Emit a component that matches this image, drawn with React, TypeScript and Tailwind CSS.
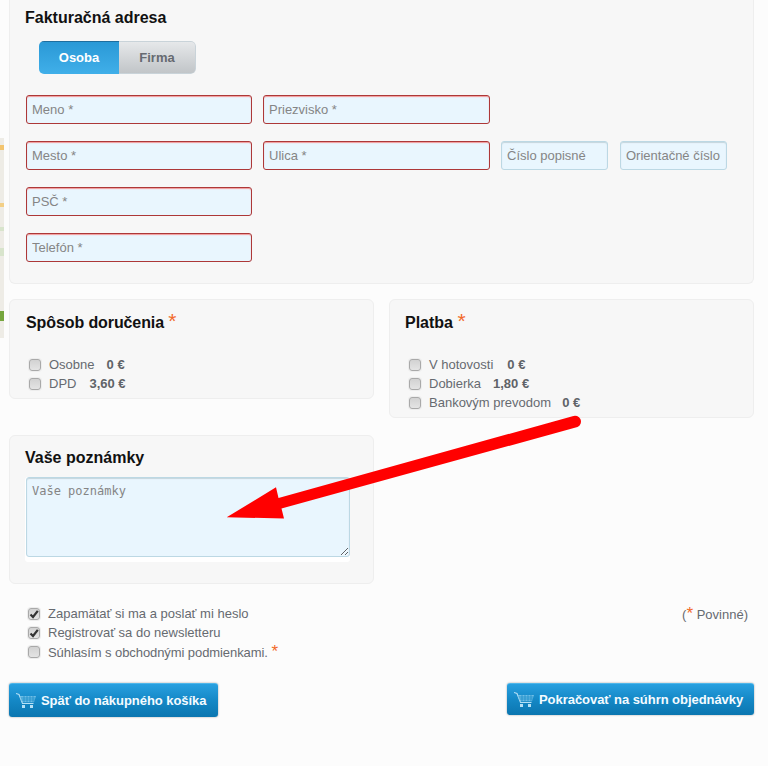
import React from 'react';

const FONT = "font-['Liberation_Sans',Arial,sans-serif]";

const CartIcon = () => (
  <svg width="20" height="15" viewBox="0 0 20 15" fill="none" className="shrink-0">
    <path d="M0 0.5 L3 1.5 L6.5 10.5 L17.5 10.5" stroke="#b5e0f5" strokeWidth="1.1" />
    <path d="M4 3 L20 3 L18 9.2 L6 9.2 Z" fill="#8ccdee" opacity="0.75" />
    <path d="M4.5 5 H19.5 M5.5 7 H19 M8 3 V9.2 M11 3 V9.2 M14 3 V9.2 M17 3 V9.2" stroke="#1489c7" strokeWidth="0.7" />
    <rect x="6" y="12" width="3" height="3" fill="#b5e0f5" />
    <rect x="14" y="12" width="3" height="3" fill="#b5e0f5" />
  </svg>
);

const Check = ({ checked = false }: { checked?: boolean }) => (
  <span className="relative inline-flex h-3 w-3 shrink-0 rounded-[3px] border border-[#a9a9a9] bg-gradient-to-b from-[#d2d2d2] to-[#e4e4e4] shadow-[0_0_0_1px_#ededed]">
    {checked && (
      <svg viewBox="0 0 12 12" className="absolute left-[-1px] top-[-1px] h-3 w-3">
        <path d="M2.5 6.5 L5 9 L9.8 2.8" stroke="#333" strokeWidth="2.2" fill="none" />
      </svg>
    )}
  </span>
);

const Field = ({ placeholder, w, required = true }: { placeholder: string; w: string; required?: boolean }) => (
  <input
    placeholder={placeholder}
    className={`${w} h-[29px] rounded-[3px] border bg-[#e9f6fe] pb-px pl-[5px] pr-[4px] text-[13px] outline-none placeholder:text-[#858585] ${
      required
        ? 'border-[#ad3838] shadow-[inset_0_1px_1px_#f29a9a]'
        : 'border-[#bcd8e4] shadow-[inset_0_1px_1px_#c5d5dc]'
    }`}
  />
);

const Option = ({ label, price, gap }: { label: string; price: string; gap: string }) => (
  <div className="flex h-[19px] items-center pl-[19px] text-[13px] text-[#666a70]">
    <Check />
    <span className="ml-[8px]">{label}</span>
    <b className={`${gap} text-[#5f6368]`}>{price}</b>
  </div>
);

const Star = ({ className }: { className: string }) => (
  <span className={`font-normal text-[#f26a2a] ${className}`}>*</span>
);

const ActionButton = ({ label, w }: { label: string; w: string }) => (
  <button className={`${w} flex items-center gap-[5px] rounded-[3px] border-t border-[#4fb6ea] bg-gradient-to-b from-[#28a0e0] via-[#1488c6] to-[#0b76b0] pl-[7px] text-[13px] font-bold tracking-[-0.05px] text-[#f4fbff] shadow-[0_0_2px_#999]`}>
    <CartIcon />
    <span>{label}</span>
  </button>
);

export default function App() {
  return (
    <div className={`${FONT} relative h-[766px] w-[768px] overflow-hidden bg-[#fcfcfc] pl-[9px] pr-[14px]`}>
      {/* map sliver from the page behind */}
      <svg className="absolute left-0 top-[138px]" width="4" height="200" viewBox="0 0 4 200">
        <rect width="4" height="200" fill="#eeece6" />
        <rect y="7" width="4" height="5" fill="#f3c46e" />
        <rect y="65" width="4" height="4" fill="#f3cf86" />
        <rect y="89" width="4" height="4" fill="#d8e4cc" />
        <rect y="110" width="4" height="8" fill="#d8e4cc" />
        <rect y="173" width="4" height="10" fill="#76a63e" />
      </svg>

      {/* Billing address */}
      <section className="h-[284px] rounded-b-md border border-t-0 border-[#eeeeee] bg-[#f7f7f7] pl-[15px]">
        <h2 className="pt-[9px] text-base leading-[18px] font-bold text-[#111]">Fakturačná adresa</h2>
        <div className="ml-[14px] mt-[14px] flex h-[33px] w-[157px] overflow-hidden rounded-[5px] text-[13px] font-bold">
          <div className="flex w-[80px] items-center justify-center border-t border-[#1f6e9e] bg-gradient-to-b from-[#2a99d6] to-[#40afe9] text-white">
            Osoba
          </div>
          <div className="flex flex-1 items-center justify-center rounded-r-[5px] border border-l-0 border-[#c9d3d9] bg-gradient-to-b from-[#e6e8ea] to-[#c1c5c8] text-[#666a70]">
            Firma
          </div>
        </div>

        <div className="mt-[21px] flex flex-col gap-[17px] pl-px">
          <div className="flex gap-[11px]">
            <Field placeholder="Meno *" w="w-[226px]" />
            <Field placeholder="Priezvisko *" w="w-[227px]" />
          </div>
          <div className="flex gap-[11px]">
            <Field placeholder="Mesto *" w="w-[226px]" />
            <Field placeholder="Ulica *" w="w-[227px]" />
            <Field placeholder="Číslo popisné" w="w-[107px]" required={false} />
            <Field placeholder="Orientačné číslo" w="w-[107px] ml-px" required={false} />
          </div>
          <Field placeholder="PSČ *" w="w-[226px]" />
          <Field placeholder="Telefón *" w="w-[226px]" />
        </div>
      </section>

      {/* Delivery and payment */}
      <div className="mt-[15px] flex items-start gap-[15px]">
        <section className="h-[100px] w-[365px] rounded-md border border-[#eeeeee] bg-[#f7f7f7]">
          <h2 className="pl-[16px] pt-[11px] text-base leading-[20px] font-bold tracking-[-0.1px] text-[#111]">
            Spôsob doručenia <Star className="text-[21px]" />
          </h2>
          <div className="mt-[22px]">
            <Option label="Osobne" price="0 €" gap="ml-[12px]" />
            <Option label="DPD" price="3,60 €" gap="ml-[13px]" />
          </div>
        </section>
        <section className="h-[119px] w-[365px] rounded-md border border-[#eeeeee] bg-[#f7f7f7]">
          <h2 className="pl-[15px] pt-[11px] text-base leading-[20px] font-bold text-[#111]">
            Platba <Star className="text-[21px]" />
          </h2>
          <div className="mt-[22px]">
            <Option label="V hotovosti" price="0 €" gap="ml-[14px]" />
            <Option label="Dobierka" price="1,80 €" gap="ml-[12px]" />
            <Option label="Bankovým prevodom" price="0 €" gap="ml-[11px]" />
          </div>
        </section>
      </div>

      {/* Notes */}
      <section className="mt-[17px] h-[149px] w-[365px] rounded-md border border-[#eeeeee] bg-[#f7f7f7] pl-[15px]">
        <h2 className="pt-[13px] text-base leading-[18px] font-bold text-[#111]">Vaše poznámky</h2>
        <div className="mt-[10px] h-[85px] w-[325px] rounded-[3px] bg-white pl-px">
          <textarea
            placeholder="Vaše poznámky"
            className="block h-[80px] w-[324px] rounded-[3px] border border-[#bcd8e4] bg-[#e9f6fe] px-[5px] py-[5px] font-['DejaVu_Sans_Mono',monospace] text-xs outline-none shadow-[inset_0_1px_1px_#c5d5dc] placeholder:text-[#858585]"
          />
        </div>
      </section>

      {/* Agreements */}
      <div className="mt-[20px] flex items-start justify-between pl-[19px] pr-[6px] text-[13px] leading-[19px] text-[#666a70]">
        <div>
          <label className="flex h-[19px] items-center gap-[8px]">
            <Check checked />
            Zapamätať si ma a poslať mi heslo
          </label>
          <label className="flex h-[19px] items-center gap-[8px]">
            <Check checked />
            Registrovať sa do newsletteru
          </label>
          <label className="flex h-[19px] items-center gap-[8px]">
            <Check />
            <span className="tracking-[-0.08px]">
              Súhlasím s obchodnými podmienkami. <Star className="text-[17px]" />
            </span>
          </label>
        </div>
        <div className="h-[19px]">
          (<Star className="text-[17px]" /> Povinné)
        </div>
      </div>

      <div className="mt-[22px] flex items-start justify-between">
        <ActionButton label="Späť do nákupného košíka" w="h-[34px] w-[209px]" />
        <ActionButton label="Pokračovať na súhrn objednávky" w="h-[32px] w-[247px]" />
      </div>

      {/* red annotation arrow drawn over the page */}
      <svg className="pointer-events-none absolute left-0 top-0" width="768" height="766" viewBox="0 0 768 766">
        <path
          d="M572.5 416.2 A5.6 5.6 0 0 1 577.5 427 L281.5 508.5 L284 518.5 L226.7 517.3 L276 487.3 L278.5 498 Z"
          fill="#ff0000"
        />
      </svg>
    </div>
  );
}
